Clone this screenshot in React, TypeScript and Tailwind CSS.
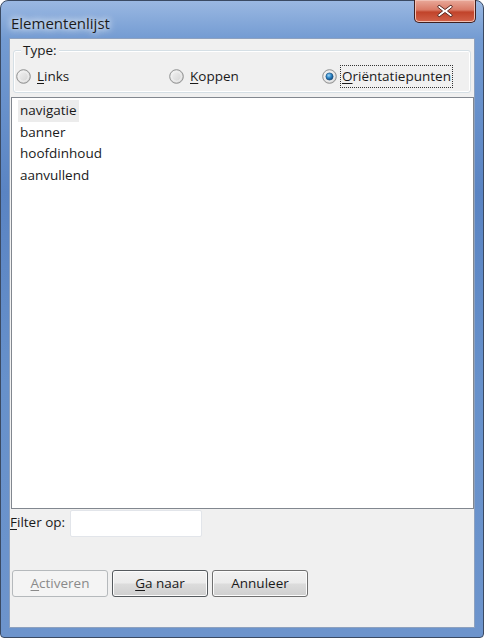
import React from "react";

const FONT = { fontFamily: '"Open Sans", "Noto Sans", Arial, sans-serif' };

const ITEMS = ["navigatie", "banner", "hoofdinhoud", "aanvullend"];

function Radio({ checked }: { checked?: boolean }) {
  return (
    <svg width="15" height="15" viewBox="0 0 15 15" className="shrink-0">
      <defs>
        <linearGradient id="rb" x1="0" y1="0" x2="1" y2="1">
          <stop offset="0" stopColor="#f6f6f6" />
          <stop offset="1" stopColor="#cfcfcf" />
        </linearGradient>
        <radialGradient id="dot" cx="0.4" cy="0.35" r="0.7">
          <stop offset="0" stopColor="#9fd6f8" />
          <stop offset="0.5" stopColor="#2d86c6" />
          <stop offset="1" stopColor="#0c3f72" />
        </radialGradient>
      </defs>
      <circle cx="7.5" cy="7.5" r="6.8" fill="url(#rb)" stroke="#8e8f8f" strokeWidth="1" />
      <circle cx="7.5" cy="7.5" r="4.8" fill="none" stroke="#f4f4f4" strokeWidth="1" />
      {checked && <circle cx="7.5" cy="7.5" r="3.6" fill="url(#dot)" stroke="#1a4f80" strokeWidth="0.6" />}
    </svg>
  );
}

function Btn({ label, mn, disabled, dark }: { label: string; mn?: boolean; disabled?: boolean; dark?: boolean }) {
  const first = label[0];
  const rest = label.slice(1);
  return (
    <button
      className={
        "w-[96px] h-[27px] rounded-[3px] border text-[13.5px] flex items-center justify-center " +
        (disabled
          ? "border-[#b5b9bc] bg-[#f4f4f4] text-[#8a8a8a]"
          : dark
          ? "border-[#555a5e] bg-[linear-gradient(#f2f2f2_0%,#ebebeb_48%,#dcdcdc_52%,#cfcfcf_100%)] text-[#1a1a1a] shadow-[inset_0_0_0_1px_#fcfcfc]"
          : "border-[#707070] bg-[linear-gradient(#f2f2f2_0%,#ebebeb_48%,#dcdcdc_52%,#cfcfcf_100%)] text-[#1a1a1a] shadow-[inset_0_0_0_1px_#fcfcfc]")
      }
    >
      {mn ? (
        <span>
          <span className="underline underline-offset-2">{first}</span>
          {rest}
        </span>
      ) : (
        label
      )}
    </button>
  );
}

export default function App() {
  return (
    <div style={FONT} className="w-[484px] h-[638px] bg-white">
      <div className="w-[484px] h-[638px] rounded-t-[8px] rounded-b-[4px] border border-[#3a4a63] bg-[linear-gradient(180deg,#9ab8e2_0%,#739bd2_6%,#5a84c3_30%,#6791cb_60%,#6d94cc_100%)] flex flex-col px-[8px] pb-[9px]">
        {/* title bar */}
        <div className="h-[37px] flex items-start justify-between shrink-0">
          <span className="mt-[11px] ml-[2px] text-[15px] text-[#1c1c1c] [text-shadow:0_0_6px_#ffffff,0_0_10px_#ffffff]">
            Elementenlijst
          </span>
          <div className="w-[62px] h-[23px] -mt-px -mr-[1px] rounded-b-[5px] border border-t-0 border-[#3f1f1f] bg-[linear-gradient(180deg,#e9a99a_0%,#d97a66_45%,#c1432a_55%,#d2634b_100%)] shadow-[inset_0_0_0_1px_#f1c0b4] flex items-center justify-center">
            <svg width="16" height="14" viewBox="0 0 16 14">
              <path d="M2 1 L8 5.5 L14 1 L15.5 3 L10.5 7 L15.5 11 L14 13 L8 8.5 L2 13 L0.5 11 L5.5 7 L0.5 3 Z" fill="#ffffff" stroke="#5a2a22" strokeWidth="1" strokeLinejoin="round" />
            </svg>
          </div>
        </div>

        {/* client area */}
        <div className="flex-1 bg-[#f0f0f0] border border-[#8da1bf] flex flex-col">
          {/* group box */}
          <div className="relative mt-[11px] ml-[3px] mr-[3px] h-[43px] border border-[#d5dfe5] rounded-[3px] shadow-[inset_0_0_0_1px_#ffffff]">
            <span className="absolute -top-[10px] left-[7px] px-[2px] bg-[#f0f0f0] text-[13.5px] leading-[18px] text-[#1a1a1a]">
              Type:
            </span>
            <div className="flex items-center h-full pt-[10px] text-[13.5px] text-[#1a1a1a]">
              <div className="flex items-center gap-[6px] ml-[2px] w-[153px]">
                <Radio />
                <span>
                  <span className="underline underline-offset-2">L</span>inks
                </span>
              </div>
              <div className="flex items-center gap-[6px] w-[153px]">
                <Radio />
                <span>
                  <span className="underline underline-offset-2">K</span>oppen
                </span>
              </div>
              <div className="flex items-center gap-[4px]">
                <Radio checked />
                <span className="outline-1 outline-dotted outline-[#333333] px-[1px]">
                  <span className="underline underline-offset-2">O</span>riëntatiepunten
                </span>
              </div>
            </div>
          </div>

          {/* list box */}
          <div className="mt-[4px] ml-px h-[412px] bg-white border border-[#82878f] pt-[2px] pl-[6px] flex flex-col items-start text-[13.5px] text-[#1a1a1a]">
            {ITEMS.map((it, i) => (
              <div
                key={it}
                className={"h-[21.6px] leading-[21.6px] px-[2px] " + (i === 0 ? "bg-[#ececec]" : "")}
              >
                {it}
              </div>
            ))}
          </div>

          {/* filter */}
          <div className="flex items-start gap-[5px] mt-[1px] text-[13.5px] text-[#1a1a1a]">
            <span className="leading-[24px]">
              <span className="underline underline-offset-2">F</span>ilter op:
            </span>
            <div className="w-[132px] h-[27px] bg-white border border-[#e2e5ea] rounded-[2px]" />
          </div>

          {/* buttons */}
          <div className="flex gap-[4px] mt-[33px] ml-[2px]">
            <Btn label="Activeren" mn disabled />
            <Btn label="Ga naar" mn dark />
            <Btn label="Annuleer" />
          </div>
        </div>
      </div>
    </div>
  );
}
